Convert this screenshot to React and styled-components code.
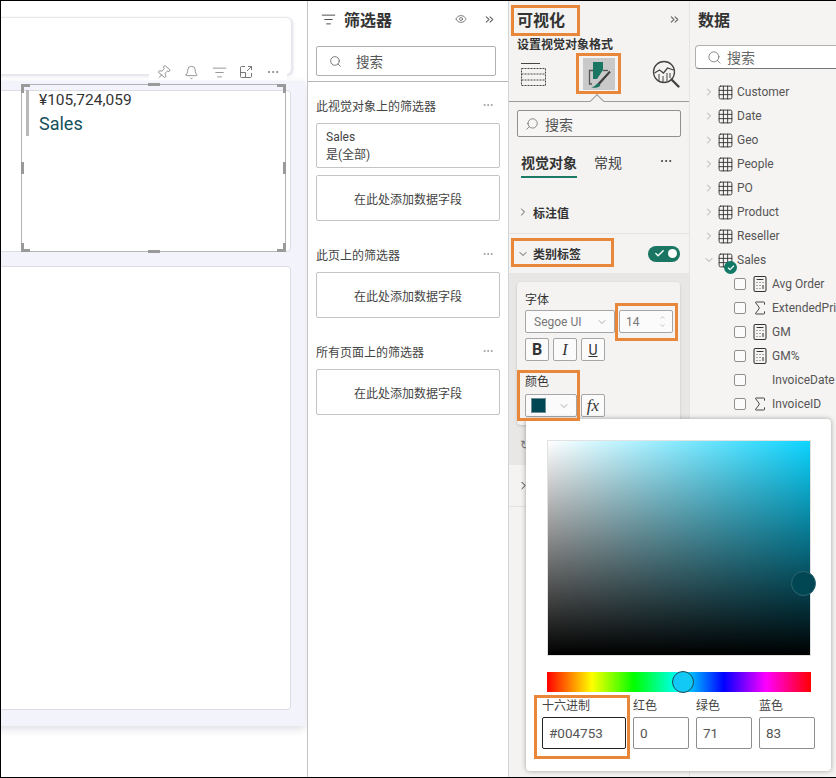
import React from "react";
import styled, { createGlobalStyle } from "styled-components";
import {
  Pin,
  Bell,
  ListFilter,
  MoreHorizontal,
  Search,
  Eye,
  ChevronsRight,
  ChevronRight,
  ChevronDown,
  ChevronUp,
  Check,
  Grid3x3,
  Calculator,
  Sigma,
} from "lucide-react";

const FONT = `Roboto, "Noto Sans CJK SC", sans-serif`;

const Global = createGlobalStyle`
  * { box-sizing: border-box; }
  html, body { margin: 0; padding: 0; background: #fff; }
  body { font-family: ${FONT}; color: #333; }
`;

const Frame = styled.div`
  position: relative;
  width: 836px;
  height: 778px;
  display: flex;
  overflow: hidden;
  background: #fff;
  border-top: 1px solid #000;
  border-left: 1px solid #000;
  border-bottom: 1px solid #000;
`;

/* canvas */
const Canvas = styled.div`
  width: 307px;
  flex: none;
  display: flex;
  flex-direction: column;
  border-right: 1px solid #c4c4c4;
  overflow: hidden;
`;

const TopCard = styled.div`
  height: 58px;
  margin: 16px 15px 0 -10px;
  background: #fff;
  border: 1px solid #e6e6ec;
  border-radius: 6px;
  box-shadow: 1px 1px 3px rgba(120, 120, 150, 0.25);
`;

const PageArea = styled.div`
  height: 645px;
  margin: 6px 2px 0 -10px;
  padding: 9px 14px 16px 0;
  background: #f3f3fc;
  display: flex;
  flex-direction: column;
  gap: 14px;
  box-shadow: 0 3px 8px rgba(80, 80, 110, 0.18);
`;

const VisualCard = styled.div`
  position: relative;
  height: ${(p) => p.$h}px;
  flex: none;
  background: #fff;
  border: 1px solid #dcdce4;
  border-radius: 4px;
`;

const HeaderIcons = styled.div`
  position: absolute;
  right: 3px;
  top: -27px;
  height: 16px;
  width: 138px;
  display: flex;
  align-items: center;
  justify-content: space-between;
  padding: 0 7px;
  background: #fff;
  color: #777;
`;

const TiltedPin = styled(Pin)`
  transform: rotate(40deg);
`;

const Selection = styled.div`
  position: absolute;
  left: 29px;
  right: 4px;
  top: -7px;
  bottom: -1px;
  border: 1px solid #b4b4b4;
  padding: 4px 4px;
`;

const Handle = styled.span`
  position: absolute;
  background: #9a9a9a;
  ${(p) => (p.$side === "top" ? "top: -2px; left: 50%; margin-left: -6px; width: 12px; height: 3px;" : "")}
  ${(p) => (p.$side === "bottom" ? "bottom: -2px; left: 50%; margin-left: -6px; width: 12px; height: 3px;" : "")}
  ${(p) => (p.$side === "left" ? "left: -1px; top: 50%; margin-top: -6px; width: 3px; height: 12px;" : "")}
  ${(p) => (p.$side === "right" ? "right: -1px; top: 50%; margin-top: -6px; width: 3px; height: 12px;" : "")}
`;

const Corner = styled.span`
  position: absolute;
  width: 9px;
  height: 9px;
  ${(p) => (p.$y === "top" ? "top: -1px; border-top: 3px solid #9a9a9a;" : "bottom: -1px; border-bottom: 3px solid #9a9a9a;")}
  ${(p) => (p.$x === "left" ? "left: -1px; border-left: 3px solid #9a9a9a;" : "right: -1px; border-right: 3px solid #9a9a9a;")}
`;

const Kpi = styled.div`
  border-left: 3px solid #b9b9b9;
  padding-left: 10px;
  height: 46px;
`;

const KpiValue = styled.div`
  font-size: 15.5px;
  line-height: 20px;
  margin-top: 1px;
  color: #333;
`;

const KpiLabel = styled.div`
  font-size: 18px;
  line-height: 28px;
  color: #14505c;
`;

/* filters */
const FilterPane = styled.div`
  width: 201px;
  flex: none;
  background: #fff;
  border-right: 1px solid #d4d4d4;
`;

const FilterHead = styled.div`
  height: 81px;
  padding: 5px 8px 0;
  border-bottom: 1px solid #b5b5b5;
`;

const FilterTitleRow = styled.div`
  display: flex;
  align-items: center;
  height: 26px;
  padding: 0 4px 0 5px;
  color: #444;
`;

const FilterTitle = styled.div`
  flex: 1;
  margin-left: 8px;
  font-size: 16px;
  font-weight: 700;
  color: #333;
`;

const HeadIcons = styled.div`
  display: flex;
  align-items: center;
  gap: 16px;
  color: #666;
`;

const FilterSearch = styled.div`
  display: flex;
  align-items: center;
  gap: 14px;
  height: 30px;
  width: 180px;
  margin-top: 14px;
  padding-left: 12px;
  border: 1px solid #b0b0b0;
  border-radius: 2px;
  font-size: 13.5px;
  color: #555;
`;

const FilterBody = styled.div`
  padding: 15px 8px 0;
`;

const FilterSection = styled.div`
  margin-bottom: ${(p) => p.$gap}px;
`;

const SectionHead = styled.div`
  display: flex;
  justify-content: space-between;
  align-items: center;
  height: 18px;
  margin-bottom: 8px;
  padding: 0 6px 2px 0;
  font-size: 12px;
  color: #444;
`;

const Dots = styled(MoreHorizontal)`
  color: #999;
`;

const AppliedFilter = styled.div`
  height: 45px;
  width: 184px;
  margin-bottom: 7px;
  padding: 4px 9px;
  border: 1px solid #c4c4c4;
  border-radius: 2px;
  font-size: 12px;
  line-height: 18px;
  color: #444;
`;

const DropField = styled.div`
  height: 46px;
  width: 184px;
  display: flex;
  align-items: center;
  justify-content: center;
  border: 1px solid #c4c4c4;
  border-radius: 2px;
  font-size: 12px;
  color: #444;
`;

/* visualizations */
const VizPane = styled.div`
  width: 181px;
  flex: none;
  background: #f4f3f2;
  border-right: 1px solid #e4e4e4;
  display: flex;
  flex-direction: column;
`;

const VizTitleRow = styled.div`
  display: flex;
  align-items: center;
  justify-content: space-between;
  height: 26px;
  margin-top: 5px;
  padding: 0 8px;
  color: #666;
`;

const VizTitle = styled.div`
  font-size: 16px;
  font-weight: 700;
  color: #333;
`;

const VizSub = styled.div`
  margin-top: 6px;
  padding: 0 8px;
  font-size: 12px;
  line-height: 15px;
  font-weight: 700;
  color: #333;
`;

const IconTabs = styled.div`
  position: relative;
  height: 49px;
  display: flex;
  align-items: flex-start;
  padding: 5px 0 0 12px;
  border-bottom: 1px solid #9c9c9c;
`;

const IconSlot = styled.div`
  width: ${(p) => p.$w}px;
  flex: none;
  height: 32px;
  display: flex;
  align-items: center;
  justify-content: ${(p) => (p.$on ? "center" : "flex-start")};
  background: ${(p) => (p.$on ? "#c9c9c9" : "transparent")};
  margin-right: ${(p) => p.$mr || 0}px;
`;

const Notch = styled.span`
  position: absolute;
  left: 83px;
  bottom: -5px;
  width: 10px;
  height: 10px;
  background: #f4f3f2;
  border-left: 1px solid #9c9c9c;
  border-top: 1px solid #9c9c9c;
  transform: rotate(45deg);
`;

const VizSearch = styled.div`
  display: flex;
  align-items: center;
  gap: 6px;
  width: 164px;
  height: 27px;
  margin: 8px 0 0 8px;
  padding-left: 7px;
  border: 1px solid #8f8f8f;
  border-radius: 2px;
  font-size: 14px;
  color: #555;
  background: #f7f6f5;
`;

const SearchGlass = styled(Search)`
  transform: scaleX(-1);
  color: #666;
`;

const Tabs = styled.div`
  display: flex;
  align-items: flex-start;
  margin: 17px 0 0 12px;
  height: 37px;
  font-size: 14px;
  flex: none;
`;

const Tab = styled.div`
  height: 24px;
  padding-bottom: 3px;
  margin-right: ${(p) => p.$mr}px;
  font-weight: ${(p) => (p.$on ? 700 : 400)};
  line-height: 18px;
  color: ${(p) => (p.$on ? "#333" : "#444")};
  border-bottom: ${(p) => (p.$on ? "2px solid #1e7a66" : "none")};
`;

const SectionRow = styled.div`
  height: ${(p) => p.$h}px;
  flex: none;
  display: flex;
  align-items: center;
  padding: 0 9px 0 8px;
  font-size: 12px;
  font-weight: 600;
  color: #333;
  gap: 4px;
  border-top: ${(p) => (p.$line ? "1px solid #e4e3e2" : "none")};
  border-bottom: ${(p) => (p.$under ? "1px solid #e4e3e2" : "none")};
`;

const Toggle = styled.div`
  margin-left: auto;
  width: 32px;
  height: 16px;
  border-radius: 8px;
  background: #1a7662;
  color: #fff;
  display: flex;
  align-items: center;
  justify-content: space-between;
  padding: 0 3px 0 6px;
`;

const ToggleKnob = styled.span`
  width: 9px;
  height: 9px;
  border-radius: 50%;
  background: #fff;
`;

const Expanded = styled.div`
  height: 192px;
  flex: none;
  background: #e8e7e6;
  padding: 9px 9px 0 8px;
  position: relative;
`;

const FontCard = styled.div`
  height: 143px;
  padding: 9px 8px 8px;
  background: #f4f3f2;
  border-radius: 4px;
  box-shadow: 0 1px 3px rgba(0, 0, 0, 0.15);
`;

const CardLabel = styled.div`
  font-size: 12px;
  line-height: 18px;
  color: #333;
  margin-bottom: ${(p) => p.$mb}px;
`;

const ControlRow = styled.div`
  display: flex;
  gap: 4px;
  margin-bottom: ${(p) => p.$mb || 0}px;
`;

const Select = styled.div`
  width: ${(p) => p.$w}px;
  height: 23px;
  flex: none;
  display: flex;
  align-items: center;
  justify-content: space-between;
  padding: 0 6px 0 ${(p) => p.$pl || 8}px;
  background: #fbfbfb;
  border: 1px solid #a6a6a6;
  border-radius: 2px;
  font-size: 12px;
  color: #777;
`;

const Stepper = styled.div`
  display: flex;
  flex-direction: column;
  color: #888;
  gap: 1px;
`;

const StyleBtn = styled.div`
  width: 24px;
  height: 23px;
  flex: none;
  display: flex;
  align-items: center;
  justify-content: center;
  background: #fbfbfb;
  border: 1px solid #a6a6a6;
  border-radius: 2px;
  font-size: ${(p) => p.$size || 14}px;
  color: #333;
  font-weight: ${(p) => (p.$bold ? 700 : 400)};
  font-style: ${(p) => (p.$italic ? "italic" : "normal")};
  font-family: ${(p) => (p.$serif ? `"Liberation Serif", serif` : FONT)};
  text-decoration: ${(p) => (p.$under ? "underline" : "none")};
`;

const Swatch = styled.span`
  width: 15px;
  height: 15px;
  background: #004753;
  border: 1px solid #6f8f96;
`;

const Revert = styled.div`
  font-size: 12px;
  color: #777;
  margin: 13px 0 0 3px;
`;

/* data */
const DataPane = styled.div`
  flex: 1;
  background: #f5f4f3;
  overflow: hidden;
`;

const DataTitle = styled.div`
  height: 26px;
  margin-top: 5px;
  padding-left: 8px;
  display: flex;
  align-items: center;
  font-size: 16px;
  font-weight: 700;
  color: #333;
`;

const DataSearch = styled.div`
  display: flex;
  align-items: center;
  gap: 5px;
  height: 24px;
  margin: 13px -4px 0 5px;
  padding-left: 11px;
  background: #fff;
  border: 1px solid #b0b0b0;
  border-bottom-color: #777;
  border-radius: 4px 0 0 4px;
  font-size: 14px;
  color: #666;
`;

const DataList = styled.div`
  padding-top: 11px;
`;

const TableRow = styled.div`
  position: relative;
  height: 24px;
  display: flex;
  align-items: center;
  padding-left: 13px;
  font-size: 12px;
  color: #555;
  white-space: nowrap;
`;

const RowChevron = styled.span`
  display: flex;
  width: 16px;
  color: #777;
`;

const RowIcon = styled.span`
  display: flex;
  width: 18px;
  color: #333;
  svg {
    flex: none;
    margin-left: -2px;
  }
`;

const Badge = styled.span`
  position: absolute;
  left: 34px;
  top: 13px;
  width: 13px;
  height: 13px;
  border-radius: 50%;
  background: #117865;
  color: #fff;
  display: flex;
  align-items: center;
  justify-content: center;
`;

const FieldRow = styled.div`
  height: 24px;
  display: flex;
  align-items: center;
  padding-left: 44px;
  font-size: 12px;
  color: #555;
  white-space: nowrap;
`;

const FieldCheck = styled.span`
  width: 12px;
  height: 12px;
  flex: none;
  margin-right: 8px;
  border: 1px solid #8f8f8f;
  border-radius: 2px;
  background: #fbfbfb;
`;

const FieldIcon = styled.span`
  width: 18px;
  flex: none;
  display: flex;
  color: #333;
  svg {
    flex: none;
    margin-left: -3px;
  }
`;

/* colour picker */
const Picker = styled.div`
  position: absolute;
  left: 525px;
  top: 418px;
  width: 305px;
  height: 352px;
  padding: 21px 20px 0 21px;
  background: #fff;
  border-radius: 4px;
  box-shadow: 0 0 5px rgba(0, 0, 0, 0.35);
`;

const Spectrum = styled.div`
  position: relative;
  width: 264px;
  height: 216px;
  background: linear-gradient(to top, #000, rgba(0, 0, 0, 0)),
    linear-gradient(to right, #fff, #0cd4ff);
  border: 1px solid #e2e2e2;
`;

const SpectrumThumb = styled.span`
  position: absolute;
  left: 243px;
  top: 130px;
  width: 25px;
  height: 25px;
  border-radius: 50%;
  background: #004753;
  border: 1px solid #2f6570;
`;

const Hue = styled.div`
  position: relative;
  width: 264px;
  height: 20px;
  margin-top: 16px;
  background: linear-gradient(
    to right,
    #f00 0%,
    #ff0 17%,
    #0f0 33%,
    #0ff 50%,
    #00f 67%,
    #f0f 83%,
    #f00 100%
  );
`;

const HueThumb = styled.span`
  position: absolute;
  left: 125px;
  top: -1px;
  width: 22px;
  height: 22px;
  border-radius: 50%;
  background: #12c8f5;
  border: 1px solid #1b4a55;
`;

const ColorFields = styled.div`
  display: flex;
  gap: 7px;
  margin: 5px 0 0 -5px;
`;

const ColorField = styled.div`
  width: ${(p) => p.$w}px;
  flex: none;
`;

const ColorLabel = styled.div`
  height: 20px;
  font-size: 12px;
  line-height: 18px;
  color: #444;
`;

const ColorInput = styled.div`
  height: 32px;
  display: flex;
  align-items: center;
  padding-left: 6px;
  border: 1px solid ${(p) => (p.$active ? "#222" : "#8f8f8f")};
  border-radius: 2px;
  font-size: 13.5px;
  color: #555;
`;

/* orange call-outs drawn over the screenshot */
const Mark = styled.div`
  position: absolute;
  left: ${(p) => p.$x}px;
  top: ${(p) => p.$y}px;
  width: ${(p) => p.$w}px;
  height: ${(p) => p.$h}px;
  border: 3px solid #e8873a;
  pointer-events: none;
`;

const FocusIcon = () => (
  <svg width="14" height="14" viewBox="0 0 14 14" fill="none" stroke="currentColor" strokeWidth="1">
    <path d="M6 1.5h-3.5a1 1 0 0 0-1 1v9a1 1 0 0 0 1 1h9a1 1 0 0 0 1-1v-3.5" />
    <path d="M1.5 7.5h5v5" />
    <path d="M8 6l4.5-4.5M9 1.5h3.5v3.5" />
  </svg>
);

const BuildIcon = () => (
  <svg width="25" height="26" viewBox="0 0 25 26" fill="none" stroke="#444" strokeWidth="1">
    <path d="M0 2.5h19" />
    <path d="M.5 7.5h24v17H.5z" strokeDasharray="2 1" />
    <path d="M.5 13h24M.5 19h24" strokeDasharray="2 1" />
  </svg>
);

const FormatIcon = () => (
  <svg width="28" height="30" viewBox="0 0 28 30" fill="none">
    <path d="M8 3h10v8l-6 9H8z" fill="#1a7662" />
    <path d="M8 11.5H4.5V25H7" stroke="#555" strokeWidth="1.3" />
    <path d="M18 11.5h5" stroke="#555" strokeWidth="1.3" />
    <path d="M24.5 11L12 24.5l2.5 2L26 13.5z" fill="#444" stroke="#eee" strokeWidth="0.6" />
    <path d="M12 24.5c-1.5 2-3 3.5-5.5 3.8 3 1 8 .8 9-2.2z" fill="#1a7662" />
  </svg>
);

const AnalyticsIcon = () => (
  <svg width="28" height="28" viewBox="0 0 28 28" fill="none" stroke="#444">
    <circle cx="12" cy="12" r="10.5" strokeWidth="1.3" />
    <path d="M19.5 19.5l7 7" strokeWidth="2.4" strokeLinecap="round" />
    <path d="M2.5 13l5-3 4 3 4-5 6 2" strokeWidth="1.3" />
    <path d="M7 14v7M11 16v6M15 13v8M18 13v5" strokeWidth="1" />
  </svg>
);

const tables = ["Customer", "Date", "Geo", "People", "PO", "Product", "Reseller"];

const fields = [
  { name: "Avg Order", icon: "calc" },
  { name: "ExtendedPrice", icon: "sum" },
  { name: "GM", icon: "calc" },
  { name: "GM%", icon: "calc" },
  { name: "InvoiceDate" },
  { name: "InvoiceID", icon: "sum" },
];

const FieldGlyph = ({ icon }) => {
  if (icon === "calc") return <Calculator size={18} strokeWidth={1.4} />;
  if (icon === "sum") return <Sigma size={18} strokeWidth={1.2} />;
  return null;
};

const App = () => {
  return (
    <Frame>
      <Global />

      <Canvas>
        <TopCard />
        <PageArea>
          <VisualCard $h={162}>
            <HeaderIcons>
              <TiltedPin size={15} strokeWidth={1.2} />
              <Bell size={15} strokeWidth={1.2} />
              <ListFilter size={15} strokeWidth={1.2} />
              <FocusIcon />
              <MoreHorizontal size={14} strokeWidth={1.5} />
            </HeaderIcons>
            <Selection>
              <Corner $x="left" $y="top" />
              <Corner $x="right" $y="top" />
              <Corner $x="left" $y="bottom" />
              <Corner $x="right" $y="bottom" />
              <Handle $side="top" />
              <Handle $side="bottom" />
              <Handle $side="left" />
              <Handle $side="right" />
              <Kpi>
                <KpiValue>¥105,724,059</KpiValue>
                <KpiLabel>Sales</KpiLabel>
              </Kpi>
            </Selection>
          </VisualCard>
          <VisualCard $h={444} />
        </PageArea>
      </Canvas>

      <FilterPane>
        <FilterHead>
          <FilterTitleRow>
            <ListFilter size={15} strokeWidth={1.5} />
            <FilterTitle>筛选器</FilterTitle>
            <HeadIcons>
              <Eye size={12} strokeWidth={1.6} />
              <ChevronsRight size={13} strokeWidth={2} />
            </HeadIcons>
          </FilterTitleRow>
          <FilterSearch>
            <Search size={13} strokeWidth={1.4} />
            搜索
          </FilterSearch>
        </FilterHead>
        <FilterBody>
          <FilterSection $gap={25}>
            <SectionHead>
              此视觉对象上的筛选器
              <Dots size={12} />
            </SectionHead>
            <AppliedFilter>
              Sales
              <br />
              是(全部)
            </AppliedFilter>
            <DropField>在此处添加数据字段</DropField>
          </FilterSection>
          <FilterSection $gap={25}>
            <SectionHead>
              此页上的筛选器
              <Dots size={12} />
            </SectionHead>
            <DropField>在此处添加数据字段</DropField>
          </FilterSection>
          <FilterSection $gap={0}>
            <SectionHead>
              所有页面上的筛选器
              <Dots size={12} />
            </SectionHead>
            <DropField>在此处添加数据字段</DropField>
          </FilterSection>
        </FilterBody>
      </FilterPane>

      <VizPane>
        <VizTitleRow>
          <VizTitle>可视化</VizTitle>
          <ChevronsRight size={13} strokeWidth={2} />
        </VizTitleRow>
        <VizSub>设置视觉对象格式</VizSub>
        <IconTabs>
          <IconSlot $w={32} $mr={30}>
            <BuildIcon />
          </IconSlot>
          <IconSlot $w={32} $mr={37} $on>
            <FormatIcon />
          </IconSlot>
          <IconSlot $w={28}>
            <AnalyticsIcon />
          </IconSlot>
          <Notch />
        </IconTabs>
        <VizSearch>
          <SearchGlass size={14} strokeWidth={1.3} />
          搜索
        </VizSearch>
        <Tabs>
          <Tab $on $mr={17}>
            视觉对象
          </Tab>
          <Tab $mr={37}>常规</Tab>
          <MoreHorizontal size={14} strokeWidth={1.5} />
        </Tabs>
        <SectionRow $h={42}>
          <ChevronRight size={12} strokeWidth={1.6} />
          标注值
        </SectionRow>
        <SectionRow $h={40} $line>
          <ChevronDown size={12} strokeWidth={1.6} />
          类别标签
          <Toggle>
            <Check size={11} strokeWidth={3} />
            <ToggleKnob />
          </Toggle>
        </SectionRow>
        <Expanded>
          <FontCard>
            <CardLabel $mb={1}>字体</CardLabel>
            <ControlRow $mb={5}>
              <Select $w={90}>
                Segoe UI
                <ChevronDown size={12} strokeWidth={1.2} />
              </Select>
              <Select $w={54} $pl={6}>
                14
                <Stepper>
                  <ChevronUp size={7} strokeWidth={1.6} />
                  <ChevronDown size={7} strokeWidth={1.6} />
                </Stepper>
              </Select>
            </ControlRow>
            <ControlRow $mb={12}>
              <StyleBtn $bold $size={16}>
                B
              </StyleBtn>
              <StyleBtn $italic $serif $size={16}>
                I
              </StyleBtn>
              <StyleBtn $under>U</StyleBtn>
            </ControlRow>
            <CardLabel $mb={3}>颜色</CardLabel>
            <ControlRow>
              <Select $w={52} $pl={5}>
                <Swatch />
                <ChevronDown size={12} strokeWidth={1.2} />
              </Select>
              <StyleBtn $italic $serif $size={17}>
                fx
              </StyleBtn>
            </ControlRow>
          </FontCard>
          <Revert>↻</Revert>
        </Expanded>
        <SectionRow $h={42} $under>
          <ChevronRight size={13} strokeWidth={1.8} />
        </SectionRow>
      </VizPane>

      <DataPane>
        <DataTitle>数据</DataTitle>
        <DataSearch>
          <Search size={15} strokeWidth={1.2} />
          搜索
        </DataSearch>
        <DataList>
          {tables.map((name) => (
            <TableRow key={name}>
              <RowChevron>
                <ChevronRight size={12} strokeWidth={1.2} />
              </RowChevron>
              <RowIcon>
                <Grid3x3 size={17} strokeWidth={1.3} />
              </RowIcon>
              {name}
            </TableRow>
          ))}
          <TableRow>
            <RowChevron>
              <ChevronDown size={12} strokeWidth={1.2} />
            </RowChevron>
            <RowIcon>
              <Grid3x3 size={17} strokeWidth={1.3} />
            </RowIcon>
            Sales
            <Badge>
              <Check size={8} strokeWidth={3.5} />
            </Badge>
          </TableRow>
          {fields.map((f) => (
            <FieldRow key={f.name}>
              <FieldCheck />
              <FieldIcon>
                <FieldGlyph icon={f.icon} />
              </FieldIcon>
              {f.name}
            </FieldRow>
          ))}
        </DataList>
      </DataPane>

      <Picker>
        <Spectrum>
          <SpectrumThumb />
        </Spectrum>
        <Hue>
          <HueThumb />
        </Hue>
        <ColorFields>
          <ColorField $w={84}>
            <ColorLabel>十六进制</ColorLabel>
            <ColorInput $active>#004753</ColorInput>
          </ColorField>
          <ColorField $w={56}>
            <ColorLabel>红色</ColorLabel>
            <ColorInput>0</ColorInput>
          </ColorField>
          <ColorField $w={56}>
            <ColorLabel>绿色</ColorLabel>
            <ColorInput>71</ColorInput>
          </ColorField>
          <ColorField $w={56}>
            <ColorLabel>蓝色</ColorLabel>
            <ColorInput>83</ColorInput>
          </ColorField>
        </ColorFields>
      </Picker>

      <Mark $x={510} $y={4} $w={69} $h={31} />
      <Mark $x={575} $y={52} $w={45} $h={41} />
      <Mark $x={510} $y={237} $w={103} $h={29} />
      <Mark $x={614} $y={302} $w={63} $h={38} />
      <Mark $x={516} $y={369} $w={63} $h={51} />
      <Mark $x={533} $y={694} $w={96} $h={64} />
    </Frame>
  );
};

export default App;
